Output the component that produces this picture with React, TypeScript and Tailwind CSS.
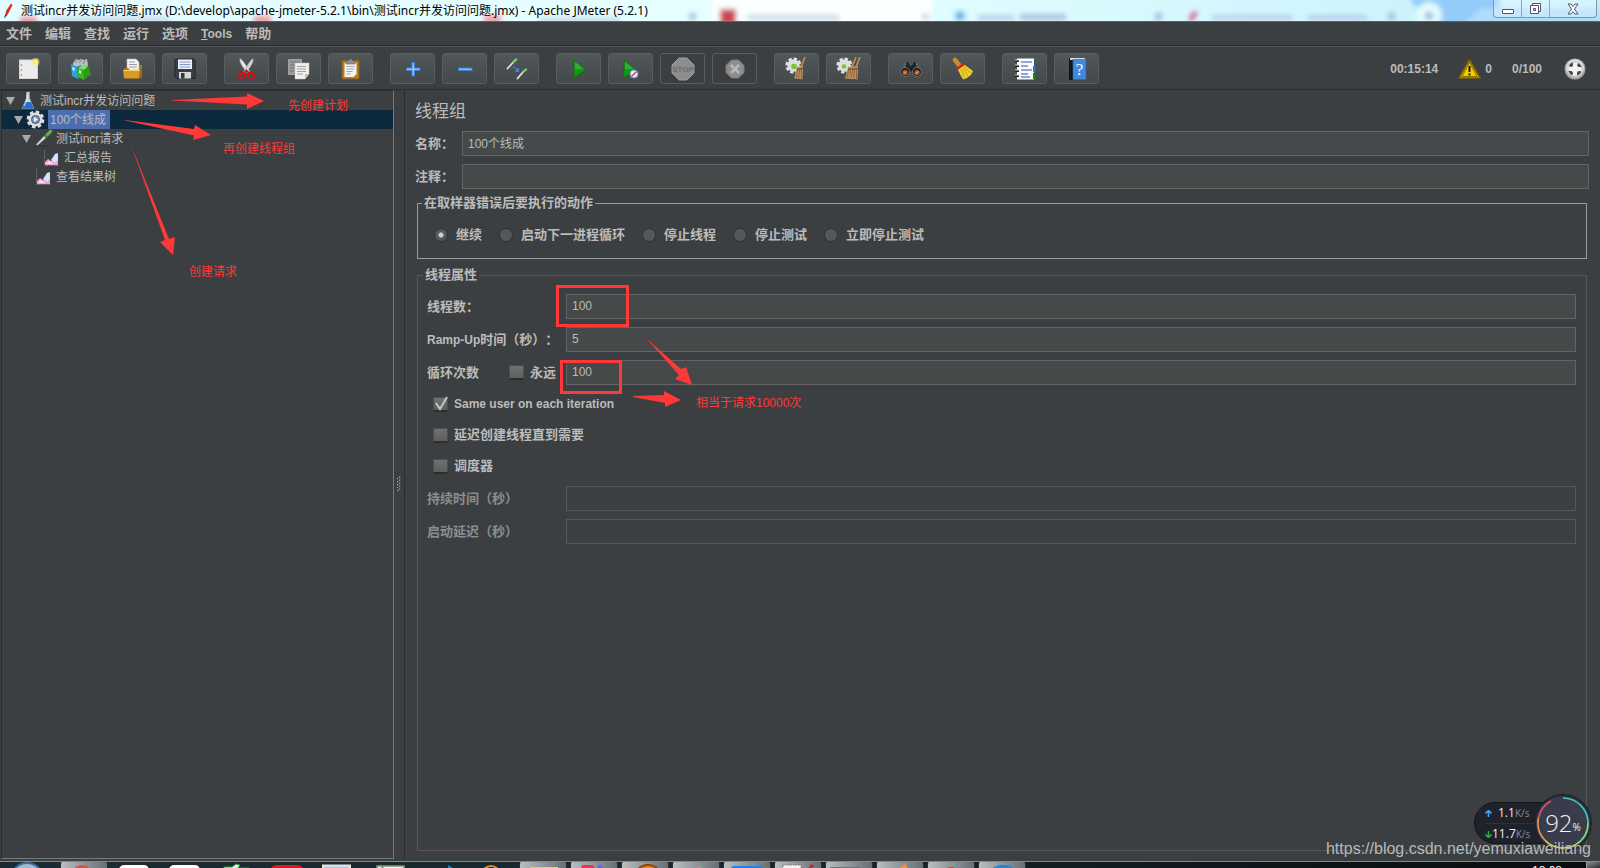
import React, { useState } from 'react';

const STOP_GREY = '#8d8d8d';

/* ---------- toolbar icons ---------- */

const NewIcon = () => (
  <svg width="22" height="22" viewBox="0 0 22 22">
    <rect x="1.5" y="2" width="18" height="18.5" fill="#ececea" stroke="#d2d2d0" />
    <path d="M3.5 6v2M3.5 11v2M3.5 16v2" stroke="#9a9a9a" strokeWidth="1.2" />
    <circle cx="17.5" cy="4" r="4" fill="#f5ee8a" opacity=".55" />
    <circle cx="17.5" cy="4" r="2.4" fill="#f7ec4f" />
    <circle cx="17.5" cy="4" r="1" fill="#fffde0" />
  </svg>
);

const TemplateIcon = () => (
  <svg width="22" height="22" viewBox="0 0 22 22">
    <path d="M3 5l3-4 3 1 2-1 3 1 3-1 1 6-3 4H3z" fill="#b9c0c4" />
    <path d="M5 5l2-3M9 5l2-3M13 6l2-4" stroke="#7e868b" />
    <path d="M1 6l7 3v12l-6-3z" fill="#2ba3df" />
    <path d="M7 9l4-2v12l-3 2z" fill="#1779b8" />
    <path d="M2.5 9l2 1v3l-2-1z" fill="#e9f6fd" />
    <path d="M8 10l6 2v10l-6-3z" fill="#3fb81f" />
    <path d="M13 12l5-4 3 8-7 6z" fill="#2f9a17" />
    <path d="M8 10l5-3 5 1-4 4z" fill="#7be356" />
    <path d="M9 12l2 .7v3l-2-.8z" fill="#d9f8cf" />
  </svg>
);

const OpenIcon = () => (
  <svg width="22" height="22" viewBox="0 0 22 22">
    <path d="M5 1h9l3 3v8H5z" fill="#f4f4f2" stroke="#b9b9b7" strokeWidth=".6" />
    <path d="M7 4h6M7 6.500h8M7 9h8" stroke="#9b9b9b" />
    <path d="M2 10h4l2 2h9V7h3v13H2z" fill="#b57b13" />
    <path d="M1 12h17l-1 8.500H2z" fill="#d99a26" />
    <path d="M1.500 12.500h16" stroke="#f8d27d" />
    <path d="M18 12l2-4v12l-3 .5z" fill="#a3690a" />
  </svg>
);

const SaveIcon = () => (
  <svg width="22" height="22" viewBox="0 0 22 22">
    <path d="M1 2.500Q1 1 2.500 1h17Q21 1 21 2.500v18H2.500L1 19z" fill="#3a3d42" stroke="#24262a" />
    <rect x="4" y="1.500" width="14" height="9.500" fill="#eef2f7" />
    <path d="M5.500 4h11M5.500 6.500h11M5.500 9h11" stroke="#7c9ac5" />
    <rect x="5" y="14" width="12" height="6.500" fill="#d5d6d8" />
    <rect x="7" y="15" width="3.500" height="5.500" fill="#33363b" />
  </svg>
);

const CutIcon = () => (
  <svg width="22" height="22" viewBox="0 0 22 22">
    <path d="M4 .5C2.500 4 8 11 12 15.500l2-2C11 9 8 3 4 .5z" fill="#e6e6e6" stroke="#8f8f8f" strokeWidth=".5" />
    <path d="M17 .5C18.500 4 13 11 9.500 15.500l-2-2C11 9 13 3 17 .5z" fill="#d4d4d4" stroke="#8f8f8f" strokeWidth=".5" />
    <ellipse cx="6" cy="17.500" rx="3.400" ry="2.600" fill="none" stroke="#d11212" strokeWidth="2.200" transform="rotate(-35 6 17.500)" />
    <ellipse cx="15" cy="17.500" rx="3.400" ry="2.600" fill="none" stroke="#d11212" strokeWidth="2.200" transform="rotate(35 15 17.500)" />
    <path d="M8 15l2.500-2.500L13 15" stroke="#d11212" strokeWidth="1.800" fill="none" />
  </svg>
);

const CopyIcon = () => (
  <svg width="24" height="24" viewBox="0 0 24 24">
    <rect x="1" y="2" width="14" height="16" fill="#9b9d9e" />
    <path d="M3 5h10M3 8h5M3 11h5M3 14h4" stroke="#6f7172" />
    <path d="M8 6h14v11l-4 5H8z" fill="#f0f0ee" stroke="#c4c4c2" strokeWidth=".5" />
    <path d="M10 9.500h9M10 12h9M10 14.500h9M10 17h6" stroke="#a2a2a2" />
    <path d="M18 22v-5h4z" fill="#bfbfbd" />
  </svg>
);

const PasteIcon = () => (
  <svg width="22" height="22" viewBox="0 0 22 22">
    <rect x="2" y="2.500" width="17" height="18.500" rx="1" fill="#b87c28" stroke="#8a5a17" />
    <path d="M4.500 5h12v11l-3 3h-9z" fill="#f3f3f1" />
    <path d="M6.500 8.500h8M6.500 11h8M6.500 13.500h6M6.500 16h4" stroke="#a7a7a7" />
    <path d="M6 6V3h2.500Q9 1 10.500 1T12.500 3H15v3z" fill="#8f9190" stroke="#5e605f" strokeWidth=".6" />
  </svg>
);

const PlusIcon = () => (
  <svg width="22" height="22" viewBox="0 0 22 22">
    <path d="M10 4.500h2.500V10H18v2.500h-5.500V18H10v-5.500H4.500V10H10z" fill="#8fbcf5" stroke="#3f7cd0" strokeWidth="1" />
  </svg>
);

const MinusIcon = () => (
  <svg width="22" height="22" viewBox="0 0 22 22">
    <rect x="4.500" y="10" width="13.500" height="2.500" fill="#8fbcf5" stroke="#3f7cd0" />
  </svg>
);

const ToggleIcon = () => (
  <svg width="22" height="22" viewBox="0 0 22 22">
    <path d="M1.500 10.500L8 3.500" stroke="#dfe6df" strokeWidth="1.800" strokeLinecap="round" />
    <path d="M7.500 4L10 1.500" stroke="#7fbf5c" strokeWidth="2.500" strokeLinecap="round" />
    <path d="M11.500 20.500L17 14" stroke="#dfe6df" strokeWidth="1.800" strokeLinecap="round" />
    <path d="M17.500 13.500L20 11.500" stroke="#7fbf5c" strokeWidth="2.500" strokeLinecap="round" />
    <path d="M7.500 8.500L11 12" stroke="#3c83ea" strokeWidth="1.500" strokeDasharray="2 .8" />
    <path d="M13 9.500v4.500H8.500z" fill="#3c83ea" />
  </svg>
);

const PlayIcon = () => (
  <svg width="22" height="22" viewBox="0 0 22 22">
    <path d="M6 2l12 9.500L6 20z" fill="#0f9a12" stroke="#0a6b0c" strokeWidth=".7" />
    <path d="M7 4l8 6.500-8 1z" fill="#3fa63f" />
  </svg>
);

const PlayNoPauseIcon = () => (
  <svg width="22" height="22" viewBox="0 0 22 22">
    <path d="M4 2l12 9.500L4 20z" fill="#0f9a12" stroke="#0a6b0c" strokeWidth=".7" />
    <path d="M5 4l8 6.500-8 1z" fill="#3fa63f" />
    <circle cx="14" cy="16" r="4" fill="#e8eef6" stroke="#5d8fc9" strokeWidth="1.200" />
    <path d="M11.500 18.500l5-5" stroke="#d33a3a" strokeWidth="1.500" />
  </svg>
);

const StopIcon = () => (
  <svg width="24" height="24" viewBox="0 0 24 24">
    <path d="M8 1h8l7 7v8l-7 7H8l-7-7V8z" fill={STOP_GREY} stroke="#9c9c9c" />
    <text x="12" y="15" textAnchor="middle" fontSize="8" fontWeight="700" fill="#6d6d6d" fontFamily="Liberation Sans, sans-serif">
      STOP
    </text>
  </svg>
);

const ShutdownIcon = () => (
  <svg width="20" height="20" viewBox="0 0 20 20">
    <path d="M6.500 1h7L19 6.500v7L13.500 19h-7L1 13.500v-7z" fill={STOP_GREY} stroke="#7c7c7c" />
    <path d="M6 6l8 8M14 6l-8 8" stroke="#b8b8b8" strokeWidth="2.600" />
  </svg>
);

const Gear = () => (
  <>
    <circle cx="8.500" cy="8.500" r="6.600" fill="none" stroke="#e2e4e4" strokeWidth="3" strokeDasharray="3.200 1.980" />
    <circle cx="8.500" cy="8.500" r="6.200" fill="#dcdedf" />
  </>
);

const Bristle = () => (
  <>
    <path d="M20 0l-4 10" stroke="#b98a55" strokeWidth="1.800" />
    <path d="M12 10l6-1v5l-.5 8.500L15 22l-6-.5z" fill="#b98d5f" />
    <path d="M13 11l-2 9.500M15 11l-1.500 10M16.500 11v10.500" stroke="#7d5934" strokeWidth=".7" />
    <path d="M12 12.500l6-1" stroke="#6d4a26" />
  </>
);

const ClearIcon = () => (
  <svg width="24" height="24" viewBox="0 0 24 24">
    <Gear />
    <circle cx="9" cy="9.500" r="2.800" fill="#7cc52d" />
    <Bristle />
  </svg>
);

const ClearAllIcon = () => (
  <svg width="26" height="24" viewBox="0 0 26 24">
    <Gear />
    <circle cx="8" cy="9.500" r="2.200" fill="#7cc52d" />
    <Bristle />
    <g transform="translate(4 0)">
      <Bristle />
    </g>
  </svg>
);

const SearchIcon = () => (
  <svg width="24" height="22" viewBox="0 0 24 22">
    <path d="M5 7l2-4 3 1 1 3h2l1-3 3-1 2 4 3 7H2z" fill="#22262b" stroke="#5f666d" strokeWidth=".8" />
    <path d="M7 5l-2 5M17 5l2 5" stroke="#7d848b" />
    <circle cx="6" cy="14" r="4.500" fill="#1c1f22" stroke="#6d7379" />
    <circle cx="18" cy="14" r="4.500" fill="#1c1f22" stroke="#6d7379" />
    <circle cx="6" cy="14.500" r="2.600" fill="#b3632b" />
    <circle cx="18" cy="14.500" r="2.600" fill="#b3632b" />
    <path d="M5 15.500l2-2M17 15.500l2-2" stroke="#f0b98d" />
  </svg>
);

const BroomIcon = () => (
  <svg width="24" height="24" viewBox="0 0 24 24">
    <path d="M4 3l4 5" stroke="#c98d2b" strokeWidth="4.500" strokeLinecap="round" />
    <path d="M6.500 11.500l6-4.500L22 14Q20 20 12.500 22.500 10 20 6.500 11.500z" fill="#efcf2e" />
    <path d="M10 12l3.500 9M12 11l5 8.500M13 9.500l7 7" stroke="#b08d0c" strokeWidth=".7" />
    <path d="M6 12l7-5" stroke="#d22020" strokeWidth="2.600" />
  </svg>
);

const FunctionIcon = () => (
  <svg width="22" height="24" viewBox="0 0 22 24">
    <rect x="3" y="1.500" width="17" height="21" fill="#fbfbfb" />
    <path d="M7 5h11M7 9h7M7 13h11M7 17h7M7 20h9" stroke="#1d55b5" />
    <rect x="19" y="9" width="2.500" height="6" fill="#2477dd" />
    <rect x="19" y="16" width="2.500" height="6" fill="#14861a" />
    <path d="M1 4h4M1 9h4M1 14h4M1 19h4" stroke="#1f1f1f" strokeWidth="2" />
    <path d="M1 3h4M1 8h4M1 13h4M1 18h4" stroke="#cfcfcf" />
  </svg>
);

const HelpIcon = () => (
  <svg width="22" height="24" viewBox="0 0 22 24">
    <rect x="3" y="1" width="4" height="22" fill="#12151a" />
    <rect x="4" y="1" width="15" height="2" fill="#d7dbe0" />
    <rect x="7" y="2.500" width="13" height="20" fill="#4388dd" stroke="#2b66b3" strokeWidth=".6" />
    <text x="13.500" y="18" textAnchor="middle" fontSize="17" fill="#f5f9ff" fontFamily="Liberation Serif, serif">
      ?
    </text>
  </svg>
);

/* ---------- tree icons ---------- */

const FlaskIcon = () => (
  <svg width="14" height="19" viewBox="0 0 14 19">
    <path d="M5.500 1h3v6L13 17.500H1L5.500 7z" fill="#c8d3de" stroke="#8f9ba6" strokeWidth=".6" />
    <path d="M4 11h6l3 6.500H1z" fill="#2273cc" />
    <path d="M6 4v5l-3 6" stroke="#fff" fill="none" opacity=".8" />
  </svg>
);

const GearIcon = () => (
  <svg width="19" height="19" viewBox="0 0 19 19">
    <circle cx="9.500" cy="9.500" r="7.300" fill="none" stroke="#dedede" strokeWidth="3.200" strokeDasharray="3.400 2.330" />
    <circle cx="9.500" cy="9.500" r="7" fill="#dedede" />
    <circle cx="9.500" cy="9.500" r="4" fill="#7f9cc4" stroke="#34506f" />
    <path d="M8 7l4 2.500L8 12z" fill="#eef3f9" />
  </svg>
);

const PipetteIcon = () => (
  <svg width="19" height="19" viewBox="0 0 20 19">
    <path d="M1 17.500h14" stroke="#24272a" opacity=".6" />
    <path d="M2 16L12 5.500l2 2L4 16.500z" fill="#dfe3e0" stroke="#7f8781" strokeWidth=".6" />
    <path d="M12.500 7l5-5" stroke="#6aae48" strokeWidth="3.500" strokeLinecap="round" />
    <path d="M10.500 5l4 4" stroke="#35632a" strokeWidth="1.400" />
  </svg>
);

const ReportIcon = () => (
  <svg width="17" height="18" viewBox="0 0 17 18">
    <path d="M1.500 1v15.500H16" stroke="#77797a" strokeDasharray="1.500 1" fill="none" />
    <path d="M2 16v-3l3-3 3 2 3-3 4 2v5z" fill="#f09fd3" />
    <path d="M8 11l4-6 3-1v7l-3 3z" fill="#cfe3fb" />
    <path d="M3 15l3-3 5 3z" fill="#fbdcf0" />
  </svg>
);

const TOOLBAR = [
  [
    { name: '新建', icon: <NewIcon /> },
    { name: '模板', icon: <TemplateIcon /> },
    { name: '打开', icon: <OpenIcon /> },
    { name: '保存', icon: <SaveIcon /> },
  ],
  [
    { name: '剪切', icon: <CutIcon /> },
    { name: '复制', icon: <CopyIcon /> },
    { name: '粘贴', icon: <PasteIcon /> },
  ],
  [
    { name: '展开', icon: <PlusIcon /> },
    { name: '折叠', icon: <MinusIcon /> },
    { name: '切换', icon: <ToggleIcon /> },
  ],
  [
    { name: '启动', icon: <PlayIcon /> },
    { name: '不停顿启动', icon: <PlayNoPauseIcon /> },
    { name: '停止', icon: <StopIcon />, disabled: true },
    { name: '关闭', icon: <ShutdownIcon />, disabled: true },
  ],
  [
    { name: '清除', icon: <ClearIcon /> },
    { name: '清除全部', icon: <ClearAllIcon /> },
  ],
  [
    { name: '搜索', icon: <SearchIcon /> },
    { name: '重置搜索', icon: <BroomIcon /> },
  ],
  [
    { name: '函数助手', icon: <FunctionIcon /> },
    { name: '帮助', icon: <HelpIcon /> },
  ],
];

const TREE = [
  { label: '测试incr并发访问问题', indent: 'pl-1', icon: <FlaskIcon />, open: true },
  { label: '100个线成', indent: 'pl-3', icon: <GearIcon />, open: true },
  { label: '测试incr请求', indent: 'pl-5', icon: <PipetteIcon />, open: true },
  { label: '汇总报告', indent: 'pl-10', icon: <ReportIcon />, open: false },
  { label: '查看结果树', indent: 'pl-8', icon: <ReportIcon />, open: false },
];

const ERROR_ACTIONS = ['继续', '启动下一进程循环', '停止线程', '停止测试', '立即停止测试'];

const TASKS = [
  { open: true, icon: <circle cx="21" cy="14" r="11" fill="#e2513f" /> },
  { open: false, icon: <rect x="8" y="3" width="30" height="14" rx="5" fill="#fff" /> },
  { open: false, icon: <rect x="7" y="3" width="31" height="14" rx="5" fill="#fff" /> },
  { open: false, icon: <path d="M11 7V5h8l4-3 4 1-2 3h11v2H11z" fill="#e8efe8" stroke="#2a9a34" strokeWidth="1" /> },
  { open: false, icon: <rect x="7" y="3" width="32" height="14" rx="5" fill="#e51616" /> },
  { open: false, icon: <rect x="8" y="3.500" width="27" height="14" fill="#b9cbe0" stroke="#e4e4e0" strokeWidth="2" /> },
  { open: false, icon: <path d="M11 4h27v8H11zM14 3l4 4" fill="#e9efe9" stroke="#7d9480" strokeWidth="1.500" /> },
  { open: false, icon: <path d="M31 3l8 5h-8z" fill="#1781d8" /> },
  { open: false, icon: <path d="M14 9q8-9 16-2" fill="none" stroke="#e08b2a" strokeWidth="2" /> },
  { open: true, icon: <rect x="10" y="5" width="28" height="8" fill="#e3c888" /> },
  { open: true, icon: <><path d="M11 3h11l3 5H10z" fill="#f62a5c" /><path d="M24 8l5-6 5 6z" fill="#5470d8" /></> },
  { open: true, icon: <circle cx="26" cy="17" r="14" fill="#f5860c" stroke="#8c4310" strokeWidth="2" /> },
  { open: true, icon: <ellipse cx="26" cy="9" rx="5" ry="4" fill="#c98f8a" /> },
  { open: true, icon: <rect x="7" y="4" width="32" height="14" rx="3" fill="#1b82f2" /> },
  { open: true, icon: <><rect x="8" y="3" width="18" height="8" fill="#f3f3f3" stroke="#777" strokeDasharray="1.500 1" /><path d="M32 8l4-6 4 2z" fill="#a8313a" /></> },
  { open: true, icon: <rect x="4" y="5" width="30" height="8" fill="#6d7679" /> },
  { open: true, icon: <path d="M20 8l8-6 4 6z" fill="#f39a2b" /> },
  { open: true, icon: <circle cx="23" cy="14" r="9" fill="#d23c35" /> },
  { open: true, icon: <ellipse cx="24" cy="11" rx="13" ry="8" fill="#1c86dd" /> },
];

const boldCjk = "text-[13px] leading-5 font-bold font-['Liberation_Sans','Noto_Sans_CJK_SC',sans-serif]";
const fieldInput =
  'h-[25px] min-w-0 flex-1 border border-[#646464] bg-[#45494a] px-[5px] pb-0.5 text-xs text-[#bbbbbb] outline-none disabled:border-[#55585a] disabled:bg-transparent';

function CheckBox({ id, defaultChecked }: { id: string; defaultChecked?: boolean }) {
  return (
    <span className="relative flex h-[15px] w-[15px] shrink-0">
      <input
        id={id}
        type="checkbox"
        defaultChecked={defaultChecked}
        className="peer h-[15px] w-[15px] appearance-none border border-b-2 border-[#4b4d4e] border-b-[#2b2d2e] bg-linear-to-b from-[#707070] to-[#5d5e5e]"
      />
      <svg width="15" height="15" viewBox="0 0 15 15" className="pointer-events-none absolute inset-0 hidden overflow-visible peer-checked:block">
        <path d="M3 6l4 6 7-12" fill="none" stroke="#c4c4c4" strokeWidth="2" />
      </svg>
    </span>
  );
}

function TitleBar() {
  return (
    <header className="relative flex h-[22px] shrink-0 items-start justify-between overflow-hidden border-b border-[#55626a] bg-linear-to-r from-[#e4fbff] via-[#e6ffff] to-[#c4f0fb]">
      {/* blurred browser tabs seen through the glass */}
      <svg width="1600" height="21" viewBox="0 0 1600 21" className="absolute top-0 left-0">
        <defs>
          <filter id="glass" x="-20%" y="-60%" width="140%" height="220%">
            <feGaussianBlur stdDeviation="2.500" />
          </filter>
        </defs>
        <g filter="url(#glass)">
          <rect x="712" y="-4" width="220" height="32" fill="#fbffff" />
          <path d="M1408-4h92v30h-70z" fill="#93cbfa" />
          <path d="M1480 8h120v20h-140z" fill="#aedcfa" />
          <circle cx="1429" cy="15" r="13" fill="#e3fbff" />
          <circle cx="1429" cy="16" r="4" fill="#a6b4dd" />
          <rect x="20" y="17" width="17" height="8" fill="#f09aa5" />
          <rect x="254" y="16" width="17" height="8" fill="#f09aa5" />
          <rect x="484" y="15" width="17" height="9" fill="#f0a3ad" />
          <rect x="50" y="17" width="120" height="6" fill="#c8dcec" />
          <rect x="540" y="17" width="80" height="6" fill="#c8dcec" />
          <rect x="689" y="13" width="7" height="7" fill="#b3c1e6" />
          <rect x="720" y="9" width="16" height="16" fill="#cc4453" />
          <rect x="747" y="15" width="92" height="5" fill="#c6d6ea" />
          <rect x="922" y="14" width="7" height="6" fill="#c6d6ea" />
          <circle cx="960" cy="16" r="5" fill="#6fb4ee" />
          <rect x="978" y="15" width="36" height="5" fill="#bccde8" />
          <rect x="1020" y="14" width="46" height="6" fill="#b0c0e2" />
          <rect x="1155" y="13" width="7" height="7" fill="#a9b9e6" />
          <path d="M1190 20l6-8" stroke="#d1468c" strokeWidth="4" />
          <rect x="1212" y="15" width="80" height="5" fill="#bccdee" />
          <rect x="1308" y="15" width="59" height="5" fill="#bccdee" />
          <rect x="1388" y="13" width="7" height="7" fill="#a9b9e6" />
        </g>
      </svg>
      <div className="relative flex h-[21px] items-center gap-2 pl-[3px]">
        <svg width="10" height="16" viewBox="0 0 10 16">
          <path d="M8 .5L9.500 2 5 11l-3 3 1-6z" fill="#e02a22" />
          <path d="M2.500 11L1 15.500l3-3z" fill="#4a2a6a" />
        </svg>
        <h1 className="text-xs whitespace-nowrap text-black font-['Noto_Sans','Noto_Sans_CJK_SC',sans-serif]">
          测试incr并发访问问题.jmx (D:\develop\apache-jmeter-5.2.1\bin\测试incr并发访问问题.jmx) - Apache JMeter (5.2.1)
        </h1>
      </div>
      <div className="relative mr-[3px] flex h-[18px] shrink-0 divide-x divide-[#8fa9b5] overflow-hidden rounded-b border border-t-0 border-[#8299a5] bg-white/30">
        <button aria-label="最小化" className="flex w-7 items-center justify-center">
          <svg width="14" height="14" viewBox="0 0 14 14">
            <rect x="1.500" y="7.500" width="11" height="4" rx=".5" fill="#fff" stroke="#4b5565" />
          </svg>
        </button>
        <button aria-label="还原" className="flex w-7 items-center justify-center">
          <svg width="13" height="14" viewBox="0 0 13 14">
            <path d="M3.500 1.500h8v8h-8z" fill="#fff" stroke="#4b5565" />
            <path d="M1.500 3.500h8v8h-8z" fill="#fff" stroke="#4b5565" />
            <path d="M4.500 6.500h2v2h-2z" fill="#cdeff8" stroke="#4b5565" />
          </svg>
        </button>
        <button aria-label="关闭窗口" className="flex w-[46px] items-center justify-center">
          <svg width="12" height="12" viewBox="0 0 12 12">
            <path d="M1 1h3l2 2.500L8 1h3L7.500 6 11 11H8L6 8.500 4 11H1l3.500-5z" fill="#fff" stroke="#4b5565" />
          </svg>
        </button>
      </div>
    </header>
  );
}

function Toolbar() {
  return (
    <div className="flex h-11 shrink-0 items-center justify-between border-t border-b border-t-[#55585a] border-b-[#2b2d2e] pt-px pl-1.5">
      <div className="flex gap-[17px]">
        {TOOLBAR.map((group, i) => (
          <div key={i} className="flex gap-[7px]">
            {group.map((tool) => (
              <button
                key={tool.name}
                aria-label={tool.name}
                disabled={tool.disabled}
                className="flex h-[31px] w-[45px] items-center justify-center rounded-[3px] border border-[#5a5d5f] bg-linear-to-b from-[#525759] to-[#43484a] disabled:bg-none"
              >
                {tool.icon}
              </button>
            ))}
          </div>
        ))}
      </div>
      <div className="flex items-center pr-3.5 text-xs font-bold">
        <span>00:15:14</span>
        <button className="ml-5 flex items-center gap-1 font-bold">
          <svg width="23" height="20" viewBox="0 0 23 20">
            <path d="M11.500 1L22 19H1z" fill="#f8c900" stroke="#7b6500" strokeWidth="1.500" strokeLinejoin="round" />
            <path d="M11.500 7v6M11.500 14.500v2" stroke="#1a1a1a" strokeWidth="2" />
            <path d="M11.500 3.500L19 17.500H4z" fill="none" stroke="#5a4b05" strokeWidth=".7" />
          </svg>
          0
        </button>
        <span className="ml-5">0/100</span>
        <svg width="22" height="22" viewBox="0 0 22 22" className="ml-[22px]">
          <circle cx="11" cy="11" r="10.500" fill="#a8a8a8" />
          <circle cx="11" cy="10" r="9" fill="#d8d8d8" />
          <circle cx="11" cy="11" r="5.500" fill="none" stroke="#4a4a4a" strokeWidth="3" strokeDasharray="4.320 4.320" strokeDashoffset="-2.160" />
          <path d="M11 5v12M5 11h12" stroke="#f3f3f3" strokeWidth="4" />
        </svg>
      </div>
    </div>
  );
}

function TestPlanTree() {
  const [selected, setSelected] = useState(1);

  return (
    <aside className="flex w-[393px] shrink-0 flex-col border border-[#2b2d2e] border-r-[#77797a] border-b-[#77797a]">
      <ul role="tree" className="text-xs">
        {TREE.map((node, i) => (
          <li
            key={node.label}
            role="treeitem"
            aria-selected={i === selected}
            onClick={() => setSelected(i)}
            className={`flex h-[19px] items-center gap-[3px] ${node.indent} ${i === selected ? 'bg-[#0d293e]' : ''}`}
          >
            {node.open && (
              <svg width="9" height="8" viewBox="0 0 9 8">
                <path d="M0 0h9L4.500 8z" fill="#a9a9a9" />
              </svg>
            )}
            <span className="flex w-[19px] justify-center">{node.icon}</span>
            <span className={`h-[19px] leading-5 ${i === selected ? 'bg-[#4b6eaf] pr-1 pl-0.5' : ''}`}>{node.label}</span>
          </li>
        ))}
      </ul>
    </aside>
  );
}

function ThreadGroupPanel() {
  return (
    <main className="flex min-w-0 flex-1 flex-col border-l border-[#2b2d2e] pt-2.5 pr-[11px] pb-2 pl-2.5">
      <h2 className="text-[17px] leading-6">线程组</h2>
      <div className="mt-[7px] flex flex-col gap-2">
        <div className="flex items-center">
          <label htmlFor="name" className={`w-[47px] ${boldCjk}`}>名称：</label>
          <input id="name" defaultValue="100个线成" className={fieldInput} />
        </div>
        <div className="flex items-center">
          <label htmlFor="comment" className={`w-[47px] ${boldCjk}`}>注释：</label>
          <input id="comment" className={fieldInput} />
        </div>
      </div>

      <fieldset className="mx-0.5 mt-1 h-[66px] border border-[#9a9c9d] pl-4">
        <legend className={`-ml-3 px-0.5 ${boldCjk}`}>在取样器错误后要执行的动作</legend>
        <div className="flex gap-[17px] pt-3">
          {ERROR_ACTIONS.map((action, i) => (
            <label key={action} className={`flex items-center gap-2 ${boldCjk}`}>
              <input
                type="radio"
                name="onError"
                defaultChecked={i === 0}
                className="h-3.5 w-3.5 appearance-none rounded-full border border-[#2f3133] bg-[#55585a] checked:bg-[radial-gradient(circle,#d0d0d0_0_2px,#55585a_3px)]"
              />
              {action}
            </label>
          ))}
        </div>
      </fieldset>

      <fieldset className="mx-0.5 mt-1.5 flex min-h-0 flex-1 flex-col border border-[#55585a] pr-2.5 pl-[9px]">
        <legend className={`-ml-1 px-0.5 ${boldCjk}`}>线程属性</legend>
        <div className="flex flex-col gap-2 pt-[9px]">
          <div className="flex items-center">
            <label htmlFor="threads" className={`w-[139px] ${boldCjk}`}>线程数：</label>
            <input id="threads" defaultValue="100" className={fieldInput} />
          </div>
          <div className="flex items-center">
            <label htmlFor="rampUp" className={`w-[139px] whitespace-nowrap [text-spacing-trim:space-all] ${boldCjk}`}>
              <span className="text-xs">Ramp-Up</span>时间（秒）：
            </label>
            <input id="rampUp" defaultValue="5" className={fieldInput} />
          </div>
          <div className="flex items-center">
            <label htmlFor="loops" className={`w-[82px] ${boldCjk}`}>循环次数</label>
            <div className="flex w-[57px] items-center gap-1.5">
              <CheckBox id="forever" />
              <label htmlFor="forever" className={boldCjk}>永远</label>
            </div>
            <input id="loops" defaultValue="100" className={fieldInput} />
          </div>
        </div>
        <div className="flex flex-col gap-[11px] pt-[9px] pl-1.5">
          <div className="flex items-center gap-1.5">
            <CheckBox id="sameUser" defaultChecked />
            <label htmlFor="sameUser" className="text-xs leading-5 font-bold">Same user on each iteration</label>
          </div>
          <div className="flex items-center gap-1.5">
            <CheckBox id="delayed" />
            <label htmlFor="delayed" className={boldCjk}>延迟创建线程直到需要</label>
          </div>
          <div className="flex items-center gap-1.5">
            <CheckBox id="scheduler" />
            <label htmlFor="scheduler" className={boldCjk}>调度器</label>
          </div>
        </div>
        <div className="flex flex-col gap-2 pt-2.5 text-[#8b8d8e]">
          <div className="flex items-center">
            <label htmlFor="duration" className={`w-[139px] ${boldCjk}`}>持续时间（秒）</label>
            <input id="duration" disabled className={fieldInput} />
          </div>
          <div className="flex items-center">
            <label htmlFor="startDelay" className={`w-[139px] ${boldCjk}`}>启动延迟（秒）</label>
            <input id="startDelay" disabled className={fieldInput} />
          </div>
        </div>
      </fieldset>
    </main>
  );
}

/* red marker notes drawn over the window */
function Annotations() {
  return (
    <div className="pointer-events-none absolute inset-0 text-xs leading-4 text-[#ff3838]">
      <svg width="830" height="420" viewBox="0 0 830 420" className="absolute top-0 left-0">
        <g fill="#ff3838">
          <path d="M172 100l75-3.500V93l17 8-17 8v-4.500l-75-4z" />
          <path d="M125 120l69 9 1-4 16 10-18 5 1-4.500-69-15z" />
          <path d="M131 145l38 94 6-2-2 18-13-13 5-2z" />
          <path d="M646 338l35 31 5-2 6 18-17-6 4-4z" />
          <path d="M633 396l31-1v-4l17 9-16 7v-4l-32-6z" />
        </g>
        <g fill="none" stroke="#ff3838" strokeWidth="3">
          <rect x="557.500" y="286.500" width="70" height="39" />
          <rect x="561.500" y="361.500" width="59" height="31" />
        </g>
      </svg>
      <span className="absolute top-[98px] left-[288px]">先创建计划</span>
      <span className="absolute top-[141px] left-[223px]">再创建线程组</span>
      <span className="absolute top-[264px] left-[189px]">创建请求</span>
      <span className="absolute top-[395px] left-[696px]">相当于请求10000次</span>
    </div>
  );
}

function SpeedWidget() {
  return (
    <div className="absolute right-[8px] bottom-[16px] flex h-[58px] items-center font-['Open_Sans',sans-serif]">
      <div className="-mr-3 flex h-[42px] w-[72px] flex-col rounded-l-full border border-[#14161c] bg-[#1f222b] pl-2.5 text-xs leading-5 text-[#f0f0f0]">
        <div className="flex items-center border-b border-[#2c303a]">
          <svg width="7" height="7" viewBox="0 0 7 7">
            <path d="M3.500 7V1M.5 3.500l3-3 3 3" fill="none" stroke="#36a9f0" strokeWidth="1.600" />
          </svg>
          <span className="ml-1.5">1.1</span>
          <span className="text-[10px] text-[#8b8d94]">K/s</span>
        </div>
        <div className="flex items-center">
          <svg width="7" height="7" viewBox="0 0 7 7">
            <path d="M3.500 0v6M.5 3.500l3 3 3-3" fill="none" stroke="#27b038" strokeWidth="1.600" />
          </svg>
          <span>11.7</span>
          <span className="text-[10px] text-[#8b8d94]">K/s</span>
        </div>
      </div>
      <div className="relative flex h-[58px] w-[58px] items-center justify-center rounded-full border-2 border-[#22252e] bg-[#393c4a] text-[#f2f2f2]">
        <svg width="54" height="54" viewBox="0 0 54 54" className="absolute inset-0">
          <g fill="none" strokeWidth="1.600">
            <path d="M27 2a25 25 0 0 1 25 25" stroke="#3cc9c0" />
            <path d="M52 27a25 25 0 0 1-12 21.400" stroke="#86dc7c" />
            <path d="M40 48.400A25 25 0 0 1 9 44.300" stroke="#dfd445" />
            <path d="M9 44.300A25 25 0 0 1 2.500 22" stroke="#ee9a4a" />
            <path d="M2.500 22A25 25 0 0 1 15 5" stroke="#ea4a72" />
          </g>
        </svg>
        <span className="text-2xl font-light">92</span>
        <span className="pt-2 text-[10px]">%</span>
      </div>
    </div>
  );
}

function Taskbar() {
  return (
    <footer className="flex h-[7px] shrink-0 items-start justify-between overflow-hidden border-t border-[#7f898c] bg-linear-to-r from-[#1b2b33] via-[#16262c] to-[#080c0e]">
      <div className="flex h-full gap-[3px]">
        <button aria-label="开始" className="w-[57px]">
          <svg width="57" height="7" viewBox="0 0 57 7">
            <circle cx="27" cy="17" r="16" fill="#9dbbd3" stroke="#3c6d9a" strokeWidth="2" />
          </svg>
        </button>
        {TASKS.map((task, i) => (
          <button key={i} aria-label={`任务 ${i + 1}`} className={`w-12 rounded-t-[2px] ${task.open ? 'border-x border-[#2a3135] bg-linear-to-r from-[#b9bfc1] to-[#667075]' : ''}`}>
            <svg width="46" height="7" viewBox="0 0 46 7">{task.icon}</svg>
          </button>
        ))}
      </div>
      <div className="flex h-full shrink-0 items-start">
        <time className="mt-px mr-6 text-xs leading-4 text-white">12:08</time>
        <button aria-label="显示桌面" className="h-full w-3.5 border-l border-[#9a9a9a] bg-linear-to-br from-[#8d9092] to-[#2c2f31]" />
      </div>
    </footer>
  );
}

export default function App() {
  return (
    <div className="relative flex h-screen flex-col overflow-hidden bg-[#3c3f41] text-[#bbbbbb] font-['Liberation_Sans','Noto_Sans_CJK_SC',sans-serif]">
      <TitleBar />
      <nav className="flex h-6 shrink-0 items-center gap-[13px] border-b border-[#2b2d2e] pl-1.5 text-[13px] font-bold">
        {['文件', '编辑', '查找', '运行', '选项'].map((item) => (
          <button key={item} className="font-bold">{item}</button>
        ))}
        <button className="text-xs font-bold"><u>T</u>ools</button>
        <button className="font-bold">帮助</button>
      </nav>
      <Toolbar />
      <div className="flex min-h-0 flex-1 pb-0.5 pl-px">
        <TestPlanTree />
        <div className="flex w-2.5 shrink-0 cursor-col-resize items-center justify-center pt-[18px]">
          <svg width="5" height="16" viewBox="0 0 5 16">
            <path d="M0 3l4-3M0 6l4-3M0 9l4-3M0 12l4-3M0 15l4-3" stroke="#c9c9c9" strokeDasharray="1.500 1" />
          </svg>
        </div>
        <ThreadGroupPanel />
      </div>
      <Taskbar />
      <Annotations />
      <SpeedWidget />
      <p className="pointer-events-none absolute right-[9px] bottom-[7px] text-base leading-6 whitespace-nowrap text-[#c8c8c8]/90">
        https://blog.csdn.net/yemuxiaweiliang
      </p>
    </div>
  );
}
